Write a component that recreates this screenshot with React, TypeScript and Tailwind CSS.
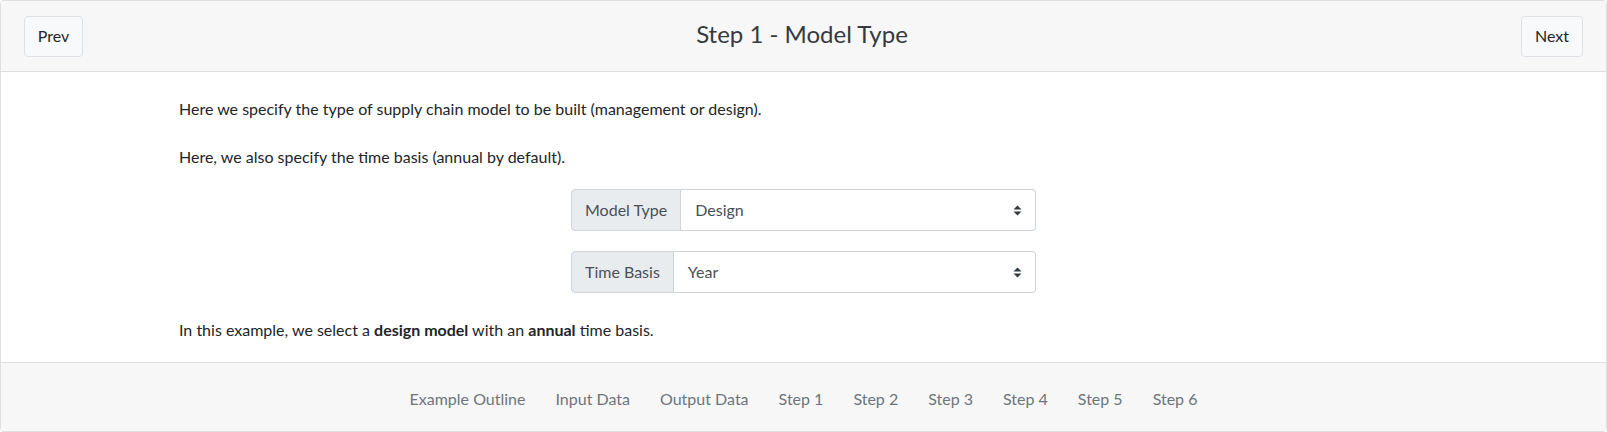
const Field = ({ label, value }: { label: string; value: string }) => {
  return (
    <div className="flex h-[42px] w-[465px] text-[16px]">
      <div className="flex items-center px-[13px] bg-[#e9ecef] border border-[#ced4da] rounded-l text-[#495057]">
        {label}
      </div>
      <div className="flex flex-1 items-center justify-between pl-[14px] pr-[13px] bg-white border border-l-0 border-[#ced4da] rounded-r text-[#495057]">
        <span>{value}</span>
        <svg width="9" height="11" viewBox="0 0 9 11">
          <path d="M4.5 0.5 L8.5 4.5 L0.5 4.5 Z" fill="#343a40" />
          <path d="M4.5 10.5 L8.5 6.5 L0.5 6.5 Z" fill="#343a40" />
        </svg>
      </div>
    </div>
  );
};

const links = [
  "Example Outline",
  "Input Data",
  "Output Data",
  "Step 1",
  "Step 2",
  "Step 3",
  "Step 4",
  "Step 5",
  "Step 6",
];

const App = () => {
  return (
    <div className="font-['Lato',sans-serif] text-[#212529] bg-white">
      <div className="border border-[#dfdfdf] rounded overflow-hidden">
        <div className="flex items-center justify-between h-[71px] px-[23px] bg-[#f7f7f7] border-b border-[#dfdfdf]">
          <button className="h-[41px] w-[59px] bg-[#f8f9fa] border border-[#dee2e6] rounded text-[16px] text-[#212529]">
            Prev
          </button>
          <h1 className="text-[24px] text-[#343a40] leading-none pb-[5px]">Step 1 - Model Type</h1>
          <button className="h-[41px] w-[62px] bg-[#f8f9fa] border border-[#dee2e6] rounded text-[16px] text-[#212529]">
            Next
          </button>
        </div>

        <div className="px-[178px] pt-[25px] pb-[20px] text-[16px] leading-6">
          <p className="mb-6">
            Here we specify the type of supply chain model to be built (management or design).
          </p>
          <p className="mb-5">Here, we also specify the time basis (annual by default).</p>
          <div className="flex flex-col items-center gap-5">
            <Field label="Model Type" value="Design" />
            <Field label="Time Basis" value="Year" />
          </div>
          <p className="mt-[25px]">
            In this example, we select a <b className="font-bold">design model</b> with an{" "}
            <b className="font-bold">annual</b> time basis.
          </p>
        </div>

        <div className="flex items-center justify-center h-[69px] pt-[3px] bg-[#f7f7f7] border-t border-[#dfdfdf]">
          {links.map((l) => (
            <a key={l} className="px-[15px] text-[16px] text-[#6c757d] cursor-pointer">
              {l}
            </a>
          ))}
        </div>
      </div>
    </div>
  );
};

export default App;
